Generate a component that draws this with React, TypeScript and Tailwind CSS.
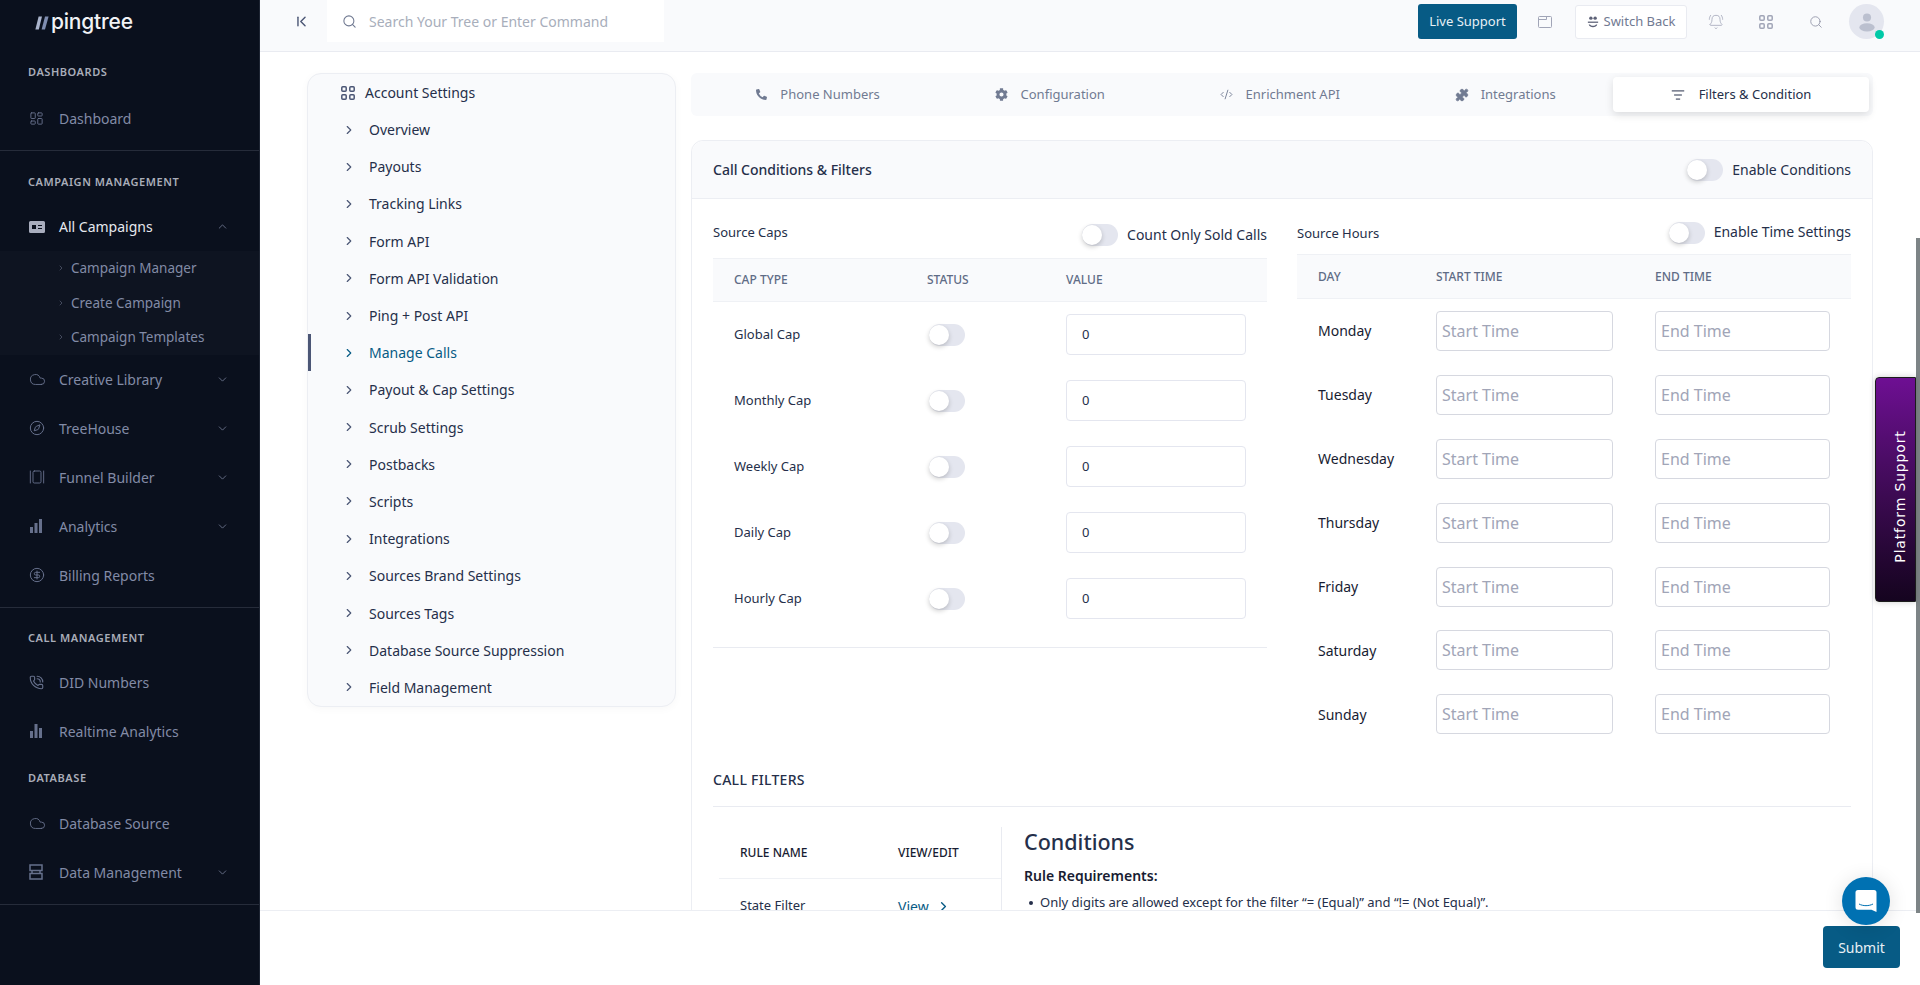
import {
  BellRing,
  ChevronDown,
  ChevronFirst,
  ChevronRight,
  ChevronUp,
  Cloud,
  CodeXml,
  Compass,
  GalleryHorizontal,
  LayoutDashboard,
  ListFilter,
  PhoneCall,
  Puzzle,
  Search,
  CircleDollarSign,
} from "lucide-react";
import { FaCog, FaPhoneAlt } from "react-icons/fa";
import type { ReactNode } from "react";

const CampaignIcon = () => (
  <svg viewBox="0 0 16 14" className="w-[16px] h-[14px]">
    <path fillRule="evenodd" fill="#a8adbd" d="M1.5 1h13A1.5 1.5 0 0 1 16 2.5v9a1.5 1.5 0 0 1-1.5 1.5h-13A1.5 1.5 0 0 1 0 11.5v-9A1.5 1.5 0 0 1 1.5 1ZM3 5v4h4V5H3Zm6 0v1h4V5H9Zm0 3v1h4V8H9Z" />
  </svg>
);

const BarsIcon = ({ flip }: { flip?: boolean }) => (
  <svg viewBox="0 0 14 14" className="w-[14px] h-[14px]" fill="#66708c">
    {flip ? (
      <>
        <rect x="1" y="7" width="3" height="7" />
        <rect x="5.5" y="0" width="3" height="14" />
        <rect x="10" y="4" width="3" height="10" />
      </>
    ) : (
      <>
        <rect x="1" y="8" width="3" height="6" />
        <rect x="5.5" y="4" width="3" height="10" />
        <rect x="10" y="0" width="3" height="14" />
      </>
    )}
  </svg>
);

const DataIcon = () => (
  <svg viewBox="0 0 14 16" className="w-[14px] h-[16px]" fill="none" stroke="#66708c" strokeWidth="1.5">
    <rect x="1" y="1" width="12" height="5.5" />
    <rect x="1" y="9.5" width="12" height="5.5" />
    <path d="M3 7v2M11 7v2" />
  </svg>
);

const GridDots = ({ color = "#a1a5b7" }: { color?: string }) => (
  <svg viewBox="0 0 14 14" className="w-[14px] h-[14px]" fill="none" stroke={color} strokeWidth="1.5">
    <rect x="0.8" y="0.8" width="4.4" height="4.4" rx="1" />
    <rect x="8.8" y="0.8" width="4.4" height="4.4" rx="1" />
    <rect x="0.8" y="8.8" width="4.4" height="4.4" rx="1" />
    <rect x="8.8" y="8.8" width="4.4" height="4.4" rx="1" />
  </svg>
);

const NavHeading = ({ label, className }: { label: string; className: string }) => (
  <div className={`flex items-center pl-[28px] text-[11px] font-semibold tracking-[0.05em] text-[#a9adb9] ${className}`}>
    {label}
  </div>
);

const NavRow = ({
  icon,
  label,
  chevron,
  active,
}: {
  icon: ReactNode;
  label: string;
  chevron?: "up" | "down";
  active?: boolean;
}) => (
  <div className="flex h-[49px] items-center pl-[28px] pr-[30px]">
    <span className="flex w-[31px] shrink-0 items-center pl-[1px]">{icon}</span>
    <span className={`flex-1 text-[14px] ${active ? "text-[#e6e8ee]" : "text-[#828ba6]"}`}>{label}</span>
    {chevron === "down" && <ChevronDown size={13} strokeWidth={1.5} className="text-[#767f99]" />}
    {chevron === "up" && <ChevronUp size={13} strokeWidth={1.5} className="text-[#767f99]" />}
  </div>
);

const SubRow = ({ label }: { label: string }) => (
  <div className="flex h-[34.5px] items-center pl-[57px] text-[13.5px] text-[#828ba6]">
    <ChevronRight size={8} strokeWidth={1.5} className="mr-[6px] text-[#767f99]" />
    {label}
  </div>
);

const Sidebar = () => (
  <aside className="flex h-full w-[260px] shrink-0 flex-col border-r border-[#1e2533] bg-[#0a101d]">
    <div className="flex h-[42px] items-center pl-[35px]">
      <svg viewBox="0 0 14 14" className="mr-[2px] mt-[4px] w-[14px] h-[14px]">
        <path d="M3.600 0.500h3.400L3.800 13.500H.4Z" fill="#aab4cc" />
        <path d="M10 0.500h3.600L10 13.500H6.600Z" fill="#7f8db0" />
      </svg>
      <span className="font-['Inter'] text-[21px] font-medium leading-none tracking-[-0.01em] text-[#f1f2f5]">pingtree</span>
    </div>
    <NavHeading label="DASHBOARDS" className="h-[52px] pt-[8px]" />
    <NavRow icon={<LayoutDashboard size={15} strokeWidth={1.5} className="text-[#66708c]" />} label="Dashboard" />
    <div className="mt-[7px] border-b border-[#262c3a]" />
    <NavHeading label="CAMPAIGN MANAGEMENT" className="h-[51px] pt-[12px]" />
    <NavRow icon={<CampaignIcon />} label="All Campaigns" chevron="up" active />
    <div className="bg-[#0e1421]">
      <SubRow label="Campaign Manager" />
      <SubRow label="Create Campaign" />
      <SubRow label="Campaign Templates" />
    </div>
    <NavRow icon={<Cloud size={17} strokeWidth={1.3} className="text-[#66708c]" />} label="Creative Library" chevron="down" />
    <NavRow icon={<Compass size={16} strokeWidth={1.5} className="text-[#66708c]" />} label="TreeHouse" chevron="down" />
    <NavRow icon={<GalleryHorizontal size={16} strokeWidth={1.4} className="text-[#66708c]" />} label="Funnel Builder" chevron="down" />
    <NavRow icon={<BarsIcon />} label="Analytics" chevron="down" />
    <NavRow icon={<CircleDollarSign size={16} strokeWidth={1.5} className="text-[#66708c]" />} label="Billing Reports" />
    <div className="mt-[7px] border-b border-[#262c3a]" />
    <NavHeading label="CALL MANAGEMENT" className="h-[50px] pt-[12px]" />
    <NavRow icon={<PhoneCall size={15} strokeWidth={1.8} className="text-[#66708c]" />} label="DID Numbers" />
    <NavRow icon={<BarsIcon flip />} label="Realtime Analytics" />
    <NavHeading label="DATABASE" className="h-[43px] pt-[2px]" />
    <NavRow icon={<Cloud size={17} strokeWidth={1.3} className="text-[#66708c]" />} label="Database Source" />
    <NavRow icon={<DataIcon />} label="Data Management" chevron="down" />
    <div className="mt-[7px] border-b border-[#262c3a]" />
  </aside>
);

const Header = () => (
  <header className="flex h-[52px] shrink-0 items-start border-b border-[#e9ebf1] bg-[#f9fafc]">
    <div className="flex h-[42px] w-[67px] items-center justify-end pr-[17px]">
      <ChevronFirst size={17} strokeWidth={2} className="text-[#4b5675]" />
    </div>
    <div className="flex h-[42px] w-[337px] items-center bg-white pl-[15px]">
      <Search size={15} strokeWidth={1.7} className="text-[#6f7890]" />
      <span className="ml-[12px] text-[14px] text-[#a8aebb]">Search Your Tree or Enter Command</span>
    </div>
    <div className="ml-auto flex items-center pr-[36px] pt-[4px]">
      <button className="h-[35px] w-[99px] rounded-[3px] bg-[#075b85] text-[13px] text-[#e8f0f5]">Live Support</button>
      <svg viewBox="0 0 14 12" className="ml-[21px] w-[14px] h-[12px]" fill="none" stroke="#a1a5b7" strokeWidth="1">
        <rect x="0.5" y="0.5" width="13" height="11" rx="1" />
        <path d="M0.5 3.500h8V0.500" />
      </svg>
      <button className="ml-[23px] flex h-[34px] w-[112px] items-center justify-center rounded-[3px] border border-[#e9ebf1] bg-white text-[13px] text-[#717a92]">
        <svg viewBox="0 0 14 14" className="mr-[5px] w-[12px] h-[12px]" fill="#5e6278">
          <circle cx="4.500" cy="2.500" r="2" />
          <circle cx="9.500" cy="2.500" r="2" />
          <path d="M1 6.500h12v1.500H1Z" />
          <path d="M2 10c1 4 9 4 10 0l-1.500 0c-1 2-6 2-7 0Z" />
        </svg>
        Switch Back
      </button>
      <BellRing size={16} strokeWidth={1.2} className="ml-[21px] text-[#a1a5b7]" />
      <span className="ml-[35px]"><GridDots /></span>
      <Search size={14} strokeWidth={1.5} className="ml-[36px] text-[#9296a8]" />
      <div className="relative ml-[26px] flex h-[35px] w-[35px] items-center justify-center rounded-full bg-[#e4e6ef]">
        <svg viewBox="0 0 20 22" className="w-[18px] h-[20px]" fill="#bbc0cf">
          <circle cx="10" cy="6" r="4.500" />
          <ellipse cx="10" cy="17" rx="8.500" ry="4.500" />
        </svg>
        <span className="absolute bottom-[0px] right-[0px] h-[9px] w-[9px] rounded-full bg-[#00c9a7]" />
      </div>
    </div>
  </header>
);

const accountItems = [
  "Overview",
  "Payouts",
  "Tracking Links",
  "Form API",
  "Form API Validation",
  "Ping + Post API",
  "Manage Calls",
  "Payout & Cap Settings",
  "Scrub Settings",
  "Postbacks",
  "Scripts",
  "Integrations",
  "Sources Brand Settings",
  "Sources Tags",
  "Database Source Suppression",
  "Field Management",
];

const AccountMenu = () => (
  <div className="h-[634px] w-[369px] shrink-0 rounded-[14px] border border-[#eceef3] bg-[#f9fafc] shadow-[0_2px_8px_rgba(0,0,0,0.03)]">
    <div className="flex h-[37px] items-center pl-[33px] text-[14px] text-[#252f4a]">
      <GridDots color="#4b5675" />
      <span className="ml-[10px]">Account Settings</span>
    </div>
    {accountItems.map((item) => {
      const active = item === "Manage Calls";
      return (
        <div
          key={item}
          className={`flex h-[37.2px] items-center border-l-[3px] pl-[31px] text-[14px] ${
            active ? "border-[#4b5675] text-[#075b85]" : "border-transparent text-[#252f4a]"
          }`}
        >
          <ChevronRight size={14} strokeWidth={2} className={active ? "text-[#075b85]" : "text-[#4b5675]"} />
          <span className="ml-[13px]">{item}</span>
        </div>
      );
    })}
  </div>
);

const tabs = [
  { label: "Phone Numbers", icon: <FaPhoneAlt size={11} />, gap: "gap-[13px]" },
  { label: "Configuration", icon: <FaCog size={13} />, gap: "gap-[13px]" },
  { label: "Enrichment API", icon: <CodeXml size={13} strokeWidth={1.7} />, gap: "gap-[13px]" },
  { label: "Integrations", icon: <Puzzle size={14} fill="currentColor" strokeWidth={1.2} />, gap: "gap-[12px]" },
];

const Tabs = () => (
  <div className="flex h-[43px] items-center rounded-[6px] bg-[#f9fafc] pl-[8px] pr-[4px]">
    {tabs.map((tab) => (
      <div key={tab.label} className={`flex flex-auto items-center justify-center text-[13px] text-[#717b92] ${tab.gap}`}>
        {tab.icon}
        {tab.label}
      </div>
    ))}
    <div className="flex h-[35px] w-[256px] items-center justify-center gap-[14px] rounded-[4px] bg-white text-[13px] text-[#252f4a] shadow-[0_3px_8px_rgba(0,0,0,0.12)]">
      <ListFilter size={14} strokeWidth={1.7} />
      Filters & Condition
    </div>
  </div>
);

const Toggle = ({ className = "" }: { className?: string }) => (
  <span className={`inline-flex h-[22px] w-[36px] shrink-0 items-center rounded-full bg-[#e4e6ef] ${className}`}>
    <span className="h-[20px] w-[20px] rounded-full bg-white shadow-[0_2px_5px_rgba(0,0,0,0.2)]" />
  </span>
);

const caps = ["Global Cap", "Monthly Cap", "Weekly Cap", "Daily Cap", "Hourly Cap"];
const days = ["Monday", "Tuesday", "Wednesday", "Thursday", "Friday", "Saturday", "Sunday"];

const SourceCaps = () => (
  <div className="w-[554px] pt-[25px]">
    <div className="mb-[12px] flex h-[22px] items-center">
      <span className="flex-1 -translate-y-[2px] text-[13px] text-[#252f4a]">Source Caps</span>
      <Toggle />
      <span className="ml-[9px] -translate-y-[1px] text-[14px] text-[#252f4a]">Count Only Sold Calls</span>
    </div>
    <div className="flex h-[44px] items-center border-y border-[#eff1f5] bg-[#f9fafc] text-[12px] font-medium text-[#5f6c86]">
      <span className="w-[214px] pl-[21px]">CAP TYPE</span>
      <span className="w-[139px]">STATUS</span>
      <span>VALUE</span>
    </div>
    <div className="border-b border-[#e9ebf1] pb-[15px]">
      {caps.map((cap) => (
        <div key={cap} className="flex h-[66px] items-center">
          <span className="w-[216px] pl-[21px] text-[13px] text-[#252f4a]">{cap}</span>
          <span className="w-[137px]"><Toggle className="translate-y-[2px]" /></span>
          <input
            readOnly
            value="0"
            className="h-[41px] w-[180px] -translate-y-[1px] rounded-[4px] border border-[#e4e6ef] bg-white px-[15px] text-[13px] text-[#252f4a] outline-none"
          />
        </div>
      ))}
    </div>
  </div>
);

const SourceHours = () => (
  <div className="w-[554px] pt-[23px]">
    <div className="mb-[10px] flex h-[22px] items-center">
      <span className="flex-1 translate-y-[1px] text-[13px] text-[#252f4a]">Source Hours</span>
      <Toggle />
      <span className="ml-[9px] -translate-y-[2px] text-[14px] text-[#252f4a]">Enable Time Settings</span>
    </div>
    <div className="flex h-[45px] items-center border-y border-[#eff1f5] bg-[#f9fafc] text-[12px] font-medium text-[#5f6c86]">
      <span className="w-[139px] pl-[21px]">DAY</span>
      <span className="w-[219px]">START TIME</span>
      <span>END TIME</span>
    </div>
    {days.map((day) => (
      <div key={day} className="flex h-[63.9px] items-center">
        <span className="w-[139px] pl-[21px] text-[14px] text-[#181c32]">{day}</span>
        <input
          readOnly
          placeholder="Start Time"
          className="h-[40px] w-[177px] rounded-[4px] border border-[#d6d8e0] bg-white px-[5px] text-[16px] outline-none placeholder:text-[#a1a5b7]"
        />
        <input
          readOnly
          placeholder="End Time"
          className="ml-[42px] h-[40px] w-[175px] rounded-[4px] border border-[#d6d8e0] bg-white px-[5px] text-[16px] outline-none placeholder:text-[#a1a5b7]"
        />
      </div>
    ))}
  </div>
);

const CallFilters = () => (
  <div className="px-[21px]">
    <div className="mt-[24px] border-b border-[#e9ebf1] pb-[16px] text-[14px] font-medium leading-[20px] tracking-[0.02em] text-[#252f4a]">
      CALL FILTERS
    </div>
    <div className="mt-[20px] flex">
      <div className="w-[289px] shrink-0 border-r border-[#e9ebf1] pl-[6px]">
        <div className="flex h-[52px] items-center border-b border-[#eff1f5] text-[12px] font-medium text-[#181c32]">
          <span className="w-[179px] pl-[21px]">RULE NAME</span>
          <span>VIEW/EDIT</span>
        </div>
        <div className="flex h-[54px] items-center text-[13px]">
          <span className="w-[179px] pl-[21px] text-[#252f4a]">State Filter</span>
          <span className="flex items-center gap-[7px] text-[14px] text-[#075b85]">
            View
            <ChevronRight size={15} strokeWidth={2.2} />
          </span>
        </div>
      </div>
      <div className="pl-[22px]">
        <div className="text-[21.5px] font-medium leading-[30px] text-[#252f4a]">Conditions</div>
        <div className="mt-[9px] text-[14px] font-semibold leading-[20px] text-[#181c32]">Rule Requirements:</div>
        <div className="mt-[7px] flex items-center text-[13px] text-[#252f4a]">
          <span className="ml-[5px] mr-[7px] h-[4px] w-[4px] rounded-full bg-[#252f4a]" />
          Only digits are allowed except for the filter “= (Equal)” and “!= (Not Equal)”.
        </div>
      </div>
    </div>
  </div>
);

export default function App() {
  return (
    <div className="relative flex h-[985px] w-[1920px] overflow-hidden bg-white font-['Noto_Sans',sans-serif]">
      <Sidebar />
      <div className="flex min-w-0 flex-1 flex-col">
        <Header />
        <main className="flex min-h-0 flex-1 gap-[15px] overflow-hidden pl-[47px] pt-[21px]">
          <AccountMenu />
          <div className="w-[1182px] shrink-0">
            <Tabs />
            <section className="mt-[24px] h-[900px] rounded-[12px] border border-[#eceef3]">
              <div className="flex h-[58px] items-center justify-between rounded-t-[12px] border-b border-[#eceef3] bg-[#f9fafc] pl-[21px] pr-[21px]">
                <span className="text-[14px] font-medium text-[#252f4a]">Call Conditions & Filters</span>
                <span className="flex items-center">
                  <Toggle />
                  <span className="ml-[9px] text-[14px] text-[#252f4a]">Enable Conditions</span>
                </span>
              </div>
              <div className="flex gap-[30px] px-[21px]">
                <SourceCaps />
                <SourceHours />
              </div>
              <CallFilters />
            </section>
          </div>
        </main>
        <footer className="flex h-[75px] shrink-0 justify-end border-t border-[#eceef3] bg-white pr-[20px] pt-[15px]">
          <button className="h-[42px] w-[77px] rounded-[4px] bg-[#075b85] text-[14px] text-[#e8f0f5]">Submit</button>
        </footer>
      </div>

      {/* overlays */}
      <div className="absolute right-0 top-[238px] h-[675px] w-[4px] bg-[#7d8486]" />
      <div className="absolute right-[4px] top-[377px] flex h-[225px] w-[41px] items-center justify-center rounded-l-[4px] border border-[#1c1c1c] bg-gradient-to-b from-[#6e0f93] to-[#15041f] shadow-[0_0_6px_rgba(0,0,0,0.2)]">
        <span className="translate-x-[5px] translate-y-[7px] -rotate-90 whitespace-nowrap font-['DejaVu_Sans'] text-[14px] tracking-[0.06em] text-white">Platform Support</span>
      </div>
      <div className="absolute left-[1842px] top-[877px] flex h-[48px] w-[48px] items-center justify-center rounded-full bg-[#0071b2] shadow-[0_2px_20px_rgba(0,0,0,0.12)]">
        <svg viewBox="0 0 22 24" className="w-[22px] h-[24px]">
          <path d="M3 1h16a2.500 2.500 0 0 1 2.500 2.500V23l-5-2.200H3A2.500 2.500 0 0 1 .5 18.300V3.500A2.500 2.500 0 0 1 3 1Z" fill="#fff" />
          <path d="M4 15c4 2.200 10 2.200 14 0" stroke="#0071b2" strokeWidth="1" fill="none" />
        </svg>
      </div>
    </div>
  );
}
